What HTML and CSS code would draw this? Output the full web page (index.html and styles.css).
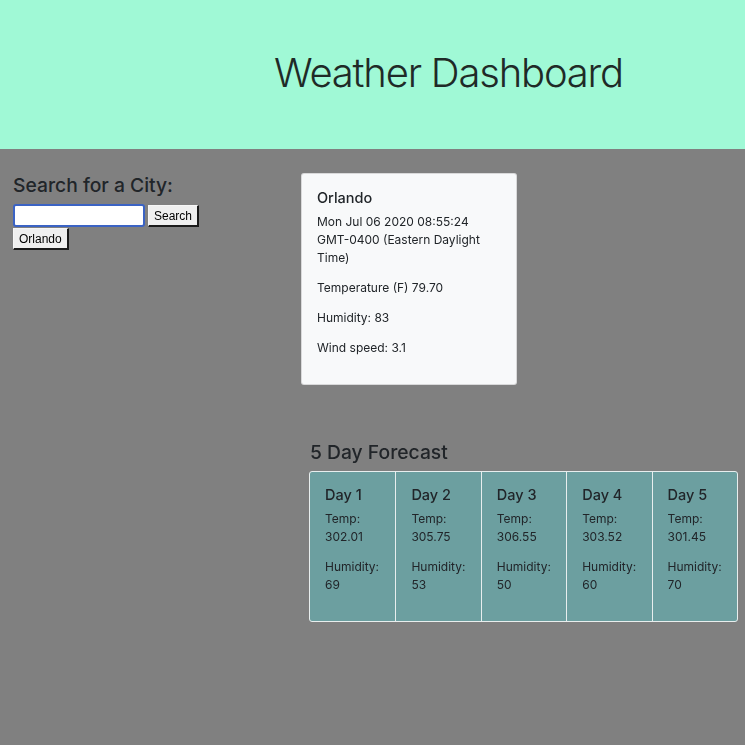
FILE: index.html
```html
<!DOCTYPE html>
<html>
<head>
<meta charset="utf-8">
<title>Weather Dashboard</title>
<link rel="stylesheet" href="styles.css">
</head>
<body>
<header class="hero">
  <h1 class="hero-title">Weather Dashboard</h1>
</header>
<main class="layout">
  <section class="search">
    <h3 class="section-title">Search for a City:</h3>
    <div class="search-row">
      <input class="search-input" type="text" autofocus>
      <button class="btn">Search</button>
    </div>
    <div class="history">
      <button class="btn">Orlando</button>
    </div>
  </section>
  <section class="results">
    <div class="current-card">
      <h5 class="card-title">Orlando</h5>
      <p class="card-text">Mon Jul 06 2020 08:55:24<br>GMT-0400 (Eastern Daylight<br>Time)</p>
      <p class="card-text">Temperature (F) 79.70</p>
      <p class="card-text">Humidity: 83</p>
      <p class="card-text">Wind speed: 3.1</p>
    </div>
    <div class="forecast">
      <h3 class="section-title">5 Day Forecast</h3>
      <div class="forecast-group">
        <div class="day">
          <h5 class="card-title">Day 1</h5>
          <p class="card-text">Temp: 302.01</p>
          <p class="card-text">Humidity: 69</p>
        </div>
        <div class="day">
          <h5 class="card-title">Day 2</h5>
          <p class="card-text">Temp: 305.75</p>
          <p class="card-text">Humidity: 53</p>
        </div>
        <div class="day">
          <h5 class="card-title">Day 3</h5>
          <p class="card-text">Temp: 306.55</p>
          <p class="card-text">Humidity: 50</p>
        </div>
        <div class="day">
          <h5 class="card-title">Day 4</h5>
          <p class="card-text">Temp: 303.52</p>
          <p class="card-text">Humidity: 60</p>
        </div>
        <div class="day">
          <h5 class="card-title">Day 5</h5>
          <p class="card-text">Temp: 301.45</p>
          <p class="card-text">Humidity: 70</p>
        </div>
      </div>
    </div>
  </section>
</main>
</body>
</html>
```

FILE: styles.css
```css
* { box-sizing: border-box; }

html, body {
  margin: 0;
  padding: 0;
}

body {
  background: #808080;
  color: #212529;
  font-family: Inter, "Noto Sans", "DejaVu Sans", sans-serif;
  font-size: 12px;
  line-height: 1.5;
  min-height: 745px;
}

.hero {
  background: #a0f9d6;
  height: 149px;
  padding: 49px 0 0 274px;
}

.hero-title {
  margin: 0;
  font-size: 40px;
  font-weight: 300;
  line-height: 1.2;
  color: #1f2a27;
  letter-spacing: -1.2px;
}

.layout {
  display: flex;
  padding: 24px 0 0 13px;
}

.search {
  width: 288px;
}

.section-title {
  margin: 0 0 6px;
  font-size: 19.3px;
  font-weight: 500;
  line-height: 25px;
  color: #212529;
}

.search-row {
  display: flex;
  align-items: center;
  gap: 3px;
}

.search-input {
  width: 132px;
  height: 23px;
  margin: 0;
  border: 2px solid #3b63c4;
  border-radius: 3px;
  background: #fff;
  padding: 0 4px;
  outline: none;
}

.btn {
  margin: 0;
  font-family: "Liberation Sans", Arial, sans-serif;
  font-size: 12px;
  line-height: 16px;
  padding: 2px 5px 1px;
  background: #efefef;
  color: #000;
  border-style: solid;
  border-width: 1px 2px 2px 1px;
  border-color: #f6f6f6 #1a1a1a #1a1a1a #f6f6f6;
  border-radius: 0;
}

.history {
  margin-top: 1px;
}

.results {
  display: flex;
  flex-direction: column;
  align-items: flex-start;
}

.current-card {
  width: 216px;
  background: #f8f9fa;
  border: 1px solid rgba(0, 0, 0, 0.125);
  border-radius: 3px;
  padding: 15px;
}

.card-title {
  margin: 0 0 6px;
  font-size: 14.5px;
  font-weight: 500;
  line-height: 18px;
}

.card-text {
  margin: 0 0 12px;
  font-size: 12px;
  line-height: 18px;
}

.forecast {
  margin: 55px 0 0 8px;
  width: 429px;
}

.forecast .section-title {
  margin-left: 1px;
}

.forecast-group {
  display: grid;
  grid-template-columns: repeat(5, 1fr);
  border: 1px solid #e8eeee;
  border-radius: 3px;
  background: #6c9fa0;
  overflow: hidden;
}

.day {
  padding: 14px 15px 3px;
  border-left: 1px solid #e8eeee;
}

.day .card-text:last-child {
  margin-bottom: 24px;
}

.day:first-child {
  border-left: none;
}
```
